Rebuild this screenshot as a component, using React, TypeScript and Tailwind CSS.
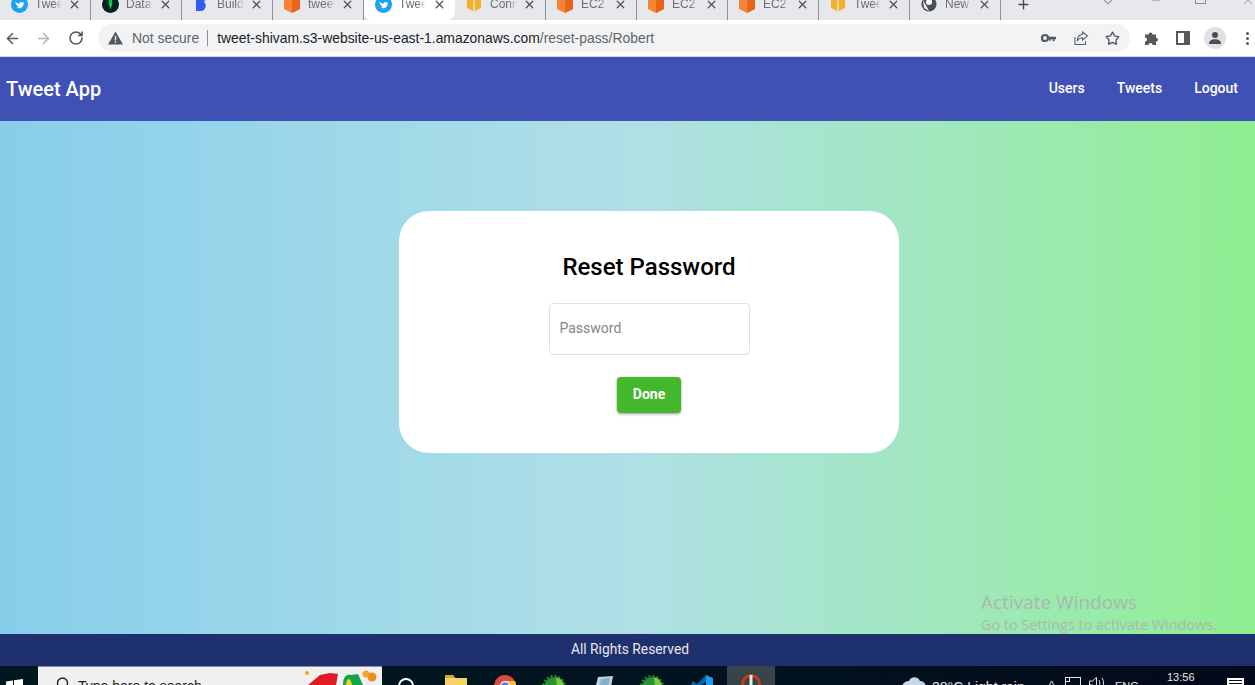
import { ArrowLeft, ArrowRight, RotateCw, Star, X, Plus, ChevronDown, Minus } from "lucide-react";

type Fav = "tweet" | "db" | "build" | "cube" | "box" | "globe";

const tabs: { title: string; icon: Fav; active?: boolean }[] = [
  { title: "Tweet", icon: "tweet" },
  { title: "Data", icon: "db" },
  { title: "Build", icon: "build" },
  { title: "tweet", icon: "cube" },
  { title: "Tweet", icon: "tweet", active: true },
  { title: "Conn", icon: "box" },
  { title: "EC2 I", icon: "cube" },
  { title: "EC2 I", icon: "cube" },
  { title: "EC2 I", icon: "cube" },
  { title: "Twee", icon: "box" },
  { title: "New", icon: "globe" },
];

function Favicon({ icon }: { icon: Fav }) {
  if (icon === "tweet")
    return (
      <svg width="17" height="17" viewBox="0 0 16 16">
        <circle cx="8" cy="8" r="8" fill="#1da1f2" />
        <path d="M4 5c1 1.500 2.500 2.300 4 2.400C8 5.800 10 5 11.200 6.200L12.500 6 11.800 7.200C11.800 10 9 12.500 5 11c1 0 1.800-.3 2.400-.9C6 9.800 4.500 8 4 5z" fill="#fff" />
      </svg>
    );
  if (icon === "db")
    return (
      <svg width="17" height="17" viewBox="0 0 16 16">
        <circle cx="8" cy="8" r="8" fill="#06201c" />
        <path d="M8 2c2 2 2.500 5 .5 9L8 13l-.5-2C5.500 7 6 4 8 2z" fill="#13c25a" />
      </svg>
    );
  if (icon === "build")
    return (
      <svg width="16" height="16" viewBox="0 0 16 16">
        <path d="M3 0h5c4 0 5 4 3 6 3 2 2 9-3 9H3z" fill="#2f5bf0" />
      </svg>
    );
  if (icon === "cube")
    return (
      <svg width="18" height="18" viewBox="0 0 18 18">
        <path d="M9 0l8 3v11l-8 4-8-4V3z" fill="#f58534" />
        <path d="M9 6l8-3v11l-8 4z" fill="#e8641b" />
      </svg>
    );
  if (icon === "box")
    return (
      <svg width="16" height="16" viewBox="0 0 16 16">
        <path d="M8 0l7 3v9l-7 3.500L1 12V3z" fill="#f3b02c" />
        <path d="M7.300 2h1.400v13h-1.400z" fill="#fff" opacity="0.7" />
      </svg>
    );
  return (
    <svg width="16" height="16" viewBox="0 0 16 16">
      <circle cx="8" cy="8" r="7.500" fill="#4a4f55" />
      <circle cx="8" cy="6" r="3" fill="#fff" />
      <path d="M2 4l4 7 2 4-5-3z" fill="#e8eaed" />
    </svg>
  );
}

function Tab({ title, icon, active }: { title: string; icon: Fav; active?: boolean }) {
  return (
    <div
      className={`relative flex h-[20px] w-[91px] shrink-0 items-center pr-[9px] pl-[10px] ${
        active ? "rounded-b-[8px] bg-white" : "border-r border-[#8e9196]"
      }`}
    >
      <div className="-mt-[12px] flex h-[18px] w-[18px] shrink-0 items-center justify-center">
        <Favicon icon={icon} />
      </div>
      <span className="-mt-[12px] ml-[7px] w-[27px] overflow-hidden text-[12px] leading-[14px] whitespace-nowrap text-[#6d6f73] [mask-image:linear-gradient(to_right,black_70%,transparent)] [font-family:'Liberation_Sans',sans-serif]">
        {title}
      </span>
      <X className="-mt-[12px] ml-auto text-[#4f5257]" size={13} strokeWidth={2.4} />
    </div>
  );
}

function TabStrip() {
  return (
    <div className="flex h-[20px] shrink-0 items-start overflow-hidden bg-[#e6e8eb] pl-0">
      {tabs.map((t, i) => (
        <Tab key={i} {...t} />
      ))}
      <Plus className="-mt-[3px] ml-[15px] shrink-0 text-[#45484c]" size={15} strokeWidth={2.2} />
      <ChevronDown className="-mt-[5px] ml-[70px] shrink-0 text-[#9a9da1]" size={14} />
      <Minus className="-mt-[7px] ml-[34px] shrink-0 text-[#8a8d91]" size={14} />
      <div className="-mt-[7px] ml-[32px] h-[11px] w-[11px] shrink-0 border border-[#8a8d91]" />
      <X className="-mt-[7px] ml-[35px] shrink-0 text-[#8a8d91]" size={14} strokeWidth={1.4} />
    </div>
  );
}

function AddressBar() {
  return (
    <div className="flex h-[37px] shrink-0 items-center border-b border-[#d4d6da] bg-white text-[#5f6368]">
      <ArrowLeft className="ml-[4px] text-[#55585d]" size={17} strokeWidth={2.2} />
      <ArrowRight className="ml-[14px] text-[#b3b5b8]" size={17} strokeWidth={2.2} />
      <RotateCw className="ml-[16px] text-[#55585d]" size={16} strokeWidth={2.4} />
      <div className="ml-[14px] flex h-[28px] w-[1032px] items-center rounded-full bg-[#f1f3f4] pl-[10px] [font-family:'Liberation_Sans',sans-serif] text-[13.9px]">
        <svg width="15" height="14" viewBox="0 0 15 14">
          <path d="M7.500 0.500L15 13.500H0z" fill="#55585d" />
          <rect x="6.800" y="5" width="1.400" height="4.500" fill="#f1f3f4" />
          <rect x="6.800" y="10.300" width="1.400" height="1.500" fill="#f1f3f4" />
        </svg>
        <span className="ml-[9px] text-[#5f6368]">Not secure</span>
        <span className="mr-[9px] ml-[8px] h-[16px] w-px bg-[#8b8e92]" />
        <span className="text-[#202124]">tweet-shivam.s3-website-us-east-1.amazonaws.com</span>
        <span className="text-[#5f6368]">/reset-pass/Robert</span>
        <svg className="ml-auto" width="15" height="10" viewBox="0 0 15 10">
          <circle cx="4" cy="5" r="3" fill="none" stroke="#55585d" strokeWidth="2.200" />
          <path d="M7 3.800h8v2.400h-1.500v2h-1.800v-2H10v1.500H8.300V6.200H7z" fill="#55585d" />
        </svg>
        <svg className="ml-[17px]" width="16" height="16" viewBox="0 0 16 16" fill="none" stroke="#5f6368" strokeWidth="1.100">
          <path d="M2 7v7.500h10.500V11" />
          <path d="M9.500 2l5 4-5 4V7.800C7 7.800 5.300 9 4.300 11c0-4 2-6.300 5.200-6.800z" />
        </svg>
        <Star className="mr-[10px] ml-[16px] text-[#55585d]" size={15} strokeWidth={2.2} />
      </div>
      <svg className="ml-[14px]" width="16" height="16" viewBox="0 0 16 16">
        <path d="M1 4.500h3.500a2 2 0 1 1 4 0H12v3.200a2 2 0 1 1 0 4V15H8.500a2 2 0 1 0-4 0H1v-3.500a2 2 0 1 0 0-4z" fill="#55585d" />
      </svg>
      <div className="ml-[16px] flex h-[14px] w-[14px] justify-start border-[2.500px] border-[#55585d] bg-[#55585d]">
        <div className="h-full w-[6px] bg-white" />
      </div>
      <div className="ml-[14px] flex h-[22px] w-[22px] items-center justify-center overflow-hidden rounded-full bg-[#dfe1e5]">
        <svg width="14" height="14" viewBox="0 0 14 14">
          <circle cx="7" cy="4" r="3" fill="#4b4e53" />
          <path d="M1 13c0-3.500 3-4.800 6-4.800s6 1.300 6 4.800z" fill="#4b4e53" />
        </svg>
      </div>
      <div className="ml-[20px] flex flex-col gap-[2px]">
        <span className="h-[3px] w-[3px] rounded-full bg-[#55585d]" />
        <span className="h-[3px] w-[3px] rounded-full bg-[#55585d]" />
        <span className="h-[3px] w-[3px] rounded-full bg-[#55585d]" />
      </div>
    </div>
  );
}

function NavBar() {
  return (
    <header className="flex h-[64px] shrink-0 items-center bg-[#3f51b5] pr-[17px] pl-[6px] text-white [font-family:Roboto,sans-serif] font-medium shadow-md">
      <span className="text-[20px]">Tweet App</span>
      <nav className="ml-auto flex gap-[32px] pb-px text-[14px]">
        <span>Users</span>
        <span>Tweets</span>
        <span>Logout</span>
      </nav>
    </header>
  );
}

function ResetCard() {
  return (
    <div className="flex h-[242px] w-[500px] flex-col items-center rounded-[30px] bg-white pt-[41px]">
      <h1 className="text-[24px] leading-[30px] font-medium text-black">Reset Password</h1>
      <div className="mt-[21px] flex h-[52px] w-[201px] items-center rounded-[4px] border border-[#dedfe1] pb-[2px] pl-[10px] text-[14px] text-[#858585]">
        Password
      </div>
      <button className="mt-[22px] h-[36px] w-[64px] rounded-[4px] bg-[#43b82c] pb-[2px] text-[14px] font-bold text-white shadow-[0_1px_3px_rgba(0,0,0,0.4)]">
        Done
      </button>
    </div>
  );
}

function TaskbarIcon({ children, className = "" }: { children: React.ReactNode; className?: string }) {
  return <div className={`flex w-[49px] shrink-0 justify-center pt-[9px] ${className}`}>{children}</div>;
}

function GreenBall() {
  return (
    <svg width="24" height="20" viewBox="0 0 24 20">
      <circle cx="12" cy="12" r="10" fill="#2a9134" />
      <path d="M14 2a10 10 0 0 1 8 10l-7 1z" fill="#7ac943" />
      <circle cx="12" cy="12" r="11" fill="none" stroke="#2a9134" strokeWidth="2" strokeDasharray="2 2" />
    </svg>
  );
}

function Taskbar() {
  return (
    <div className="flex h-[19px] shrink-0 overflow-hidden bg-gradient-to-r from-[#01171f] via-[#01141f] to-[#030a1b] [font-family:'Liberation_Sans',sans-serif] text-white">
      <div className="w-[38px] shrink-0 pt-[13px] pl-[6px]">
        <svg width="17" height="17" viewBox="0 0 17 17">
          <path d="M0 2.500l7-1v6.500H0zM8 1.300L17 0v8H8zM0 9h7v6.500l-7-1zM8 9h9v8l-9-1.300z" fill="#fff" />
        </svg>
      </div>
      <div className="relative flex w-[344px] shrink-0 items-start border-t border-[#8d9196] bg-[#f0f0f0] pt-[10px] pl-[16px] text-[14px] text-[#222]">
        <svg className="shrink-0" width="15" height="15" viewBox="0 0 15 15" fill="none" stroke="#222" strokeWidth="1.400">
          <circle cx="8.500" cy="6" r="5" />
          <path d="M5 10L1 14" />
        </svg>
        <span className="ml-[9px] leading-[18px]">Type here to search</span>
        <svg className="absolute -top-px right-0" width="78" height="19" viewBox="0 0 78 19">
          <circle cx="3" cy="7" r="2" fill="#f9a51a" />
          <path d="M4 19 16 9 26 7 34 8 32 19z" fill="#e01b24" />
          <path d="M39 19C39 9 44 8 47 9L54 8 59 19z" fill="#16a34a" />
          <path d="M42 19C42 11 47 11 48 19z" fill="#d9dc1c" />
          <circle cx="62" cy="8" r="3.500" fill="#f4a62a" />
          <circle cx="68" cy="11" r="4.500" fill="#f08c1a" />
        </svg>
      </div>
      <div className="w-[49px] shrink-0 pt-[12px] pl-[16px]">
        <div className="h-[16px] w-[16px] rounded-full border-2 border-white" />
      </div>
      <TaskbarIcon className="pl-[1px]">
        <svg width="22" height="16" viewBox="0 0 22 16">
          <path d="M0 0h8l2 3h12v13H0z" fill="#f6d365" />
          <path d="M0 0h8l2 3H0z" fill="#e0a526" />
        </svg>
      </TaskbarIcon>
      <TaskbarIcon className="pl-[1px]">
        <svg width="22" height="22" viewBox="0 0 22 22">
          <circle cx="11" cy="11" r="11" fill="#dd4b3e" />
          <path d="M1 13a11 11 0 0 0 10 9l5-9z" fill="#2ea44f" />
          <path d="M11 6h10a11 11 0 0 1-9 16l4-9z" fill="#fbc02d" />
          <circle cx="11" cy="11" r="5" fill="#fff" />
          <circle cx="11" cy="11" r="3.800" fill="#4285f4" />
        </svg>
      </TaskbarIcon>
      <TaskbarIcon>
        <GreenBall />
      </TaskbarIcon>
      <TaskbarIcon className="pl-[2px]">
        <svg width="20" height="18" viewBox="0 0 20 18">
          <path d="M4 2l15-1-3 17H0z" fill="#c4d3d9" />
          <path d="M7 4l9-1-2 9H5z" fill="#7fb3c7" />
        </svg>
      </TaskbarIcon>
      <TaskbarIcon>
        <GreenBall />
      </TaskbarIcon>
      <TaskbarIcon>
        <svg width="24" height="20" viewBox="0 0 24 20">
          <path d="M17 0l7 3v17h-7z" fill="#1f9cf0" />
          <path d="M17 0v7L8 14l-4-3-4 2 4-7 4 3z" fill="#0065a9" />
        </svg>
      </TaskbarIcon>
      <div className="ml-[2px] flex w-[48px] shrink-0 justify-center bg-[#38434a] pt-[8px]">
        <svg width="20" height="20" viewBox="0 0 20 20">
          <circle cx="10" cy="10" r="8.500" fill="none" stroke="#c8381b" strokeWidth="3" />
          <rect x="8.500" y="1" width="3" height="14" fill="#e8e8e8" />
        </svg>
      </div>
      <div className="flex flex-1 items-start">
        <svg className="mt-[8px] ml-[127px] shrink-0" width="24" height="12" viewBox="0 0 24 12">
          <path d="M0 12c2-5 6-5 7-5 2-5 9-5 11 0 3 0 5 2 6 5z" fill="#c7d7ee" />
        </svg>
        <span className="mt-[13px] ml-[6px] w-[93px] text-[14px] leading-[16px] whitespace-nowrap text-[#e7e7e7]">28°C Light rain</span>
        <span className="mt-[12px] ml-[24px] w-[7px] text-[11px] leading-[14px] text-[#e7e7e7]">^</span>
        <svg className="mt-[11px] ml-[9px] shrink-0" width="16" height="12" viewBox="0 0 16 12" fill="none" stroke="#e7e7e7">
          <rect x="0.500" y="0.500" width="15" height="11" />
          <rect x="0.500" y="0.500" width="4" height="4" />
        </svg>
        <svg className="mt-[11px] ml-[8px] shrink-0" width="17" height="12" viewBox="0 0 17 12" fill="none" stroke="#e7e7e7">
          <path d="M0.500 4h3l4-3.500v11l-4-3.500h-3z" />
          <path d="M10 3c1 2 1 4 0 6M13 1c2 3 2 7 0 10" />
        </svg>
        <span className="mt-[13px] ml-[9px] w-[24px] text-[11px] leading-[14px] text-[#e7e7e7]">ENG</span>
        <span className="ml-[28px] w-[28px] text-[11px] leading-[22px] text-[#e7e7e7]">13:56</span>
        <div className="mt-[12px] ml-[32px] flex h-[12px] w-[17px] shrink-0 flex-col gap-[2px] bg-white px-[2px] pt-[2px]">
          <span className="h-px w-full bg-[#111]" />
          <span className="h-px w-full bg-[#111]" />
        </div>
      </div>
    </div>
  );
}

export default function App() {
  return (
    <div className="flex h-[685px] w-[1255px] flex-col overflow-hidden [font-family:Roboto,sans-serif]">
      <TabStrip />
      <AddressBar />
      <NavBar />
      <main className="relative flex min-h-0 flex-1 justify-center bg-gradient-to-r from-[#87ceeb] via-[#b0e0e6] to-[#90ee90] pt-[90px] pl-[43px]">
        <ResetCard />
        <div className="absolute top-[472px] left-[981px] [font-family:'Open_Sans',sans-serif] leading-none text-[#aab8ae]">
          <div className="text-[19px]">Activate Windows</div>
          <div className="mt-[6px] text-[14.4px]">Go to Settings to activate Windows.</div>
        </div>
      </main>
      <footer className="flex h-[32px] shrink-0 items-center justify-center bg-[#1e306e] pb-[2px] pl-[5px] text-[13.8px] text-[#e8e8e8]">
        All Rights Reserved
      </footer>
      <Taskbar />
    </div>
  );
}
